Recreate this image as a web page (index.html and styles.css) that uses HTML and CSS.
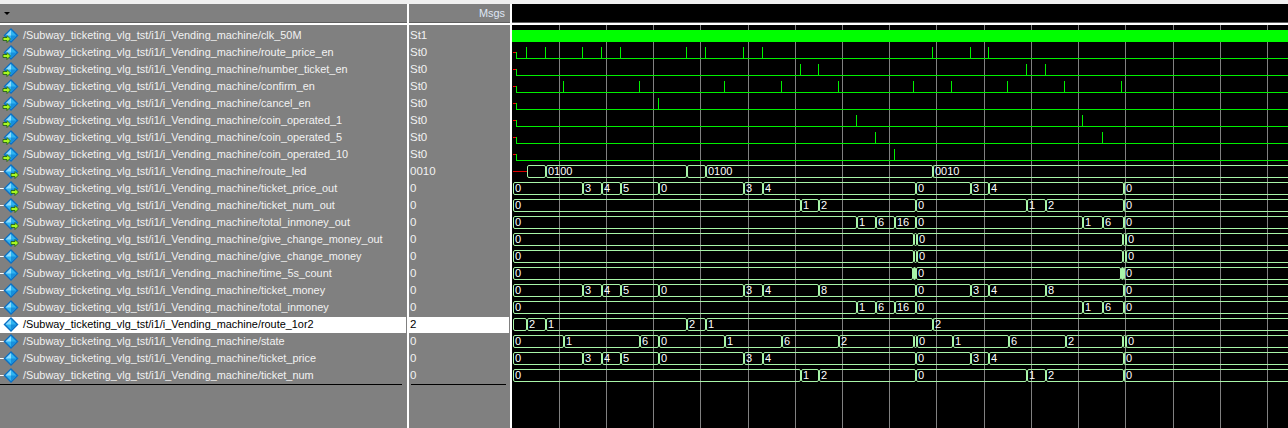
FILE: index.html
```html
<!DOCTYPE html>
<html lang="en">
<head>
<meta charset="utf-8">
<title>Wave</title>
<link rel="stylesheet" href="styles.css">
</head>
<body>
<svg class="defs" aria-hidden="true">
  <symbol id="dia" viewBox="0 0 20 17">
    <path d="M11 1 18.500 8.500 11 16 3.500 8.500Z" fill="#0a6fc4"/>
    <path d="M11 3 16.500 8.500 11 14 5.500 8.500Z" fill="#2fb4f0"/>
    <path d="M11 3 5.500 8.500H11Z" fill="#8edcff"/>
    <path d="M11 8.500H16.500L11 14Z" fill="#1890dc"/>
  </symbol>
  <symbol id="plain" viewBox="0 0 20 17">
    <path d="M0 8.500H4" stroke="#fff"/>
    <use href="#dia"/>
  </symbol>
  <symbol id="in" viewBox="0 0 20 17">
    <use href="#dia"/>
    <path d="M3 10.500H7V8.500L10.500 12 7 15.500V13.500H3Z" fill="#a8f820" stroke="#1c5a10" stroke-width=".8"/>
  </symbol>
  <symbol id="out" viewBox="0 0 20 17">
    <path d="M0 8.500H4" stroke="#fff"/>
    <use href="#dia"/>
    <path d="M11 10.500H15V8.500L18.500 12 15 15.500V13.500H11Z" fill="#a8f820" stroke="#1c5a10" stroke-width=".8"/>
  </symbol>
</svg>
<div class="strip"></div>
<main class="pane">
  <section class="col names">
    <header class="head"><span class="caret"></span></header>
    <div class="rule"></div>
    <div class="list">
      <div class="row"><svg class="ic"><use href="#in"/></svg><span>/Subway_ticketing_vlg_tst/i1/i_Vending_machine/clk_50M</span></div>
      <div class="row"><svg class="ic"><use href="#in"/></svg><span>/Subway_ticketing_vlg_tst/i1/i_Vending_machine/route_price_en</span></div>
      <div class="row"><svg class="ic"><use href="#in"/></svg><span>/Subway_ticketing_vlg_tst/i1/i_Vending_machine/number_ticket_en</span></div>
      <div class="row"><svg class="ic"><use href="#in"/></svg><span>/Subway_ticketing_vlg_tst/i1/i_Vending_machine/confirm_en</span></div>
      <div class="row"><svg class="ic"><use href="#in"/></svg><span>/Subway_ticketing_vlg_tst/i1/i_Vending_machine/cancel_en</span></div>
      <div class="row"><svg class="ic"><use href="#in"/></svg><span>/Subway_ticketing_vlg_tst/i1/i_Vending_machine/coin_operated_1</span></div>
      <div class="row"><svg class="ic"><use href="#in"/></svg><span>/Subway_ticketing_vlg_tst/i1/i_Vending_machine/coin_operated_5</span></div>
      <div class="row"><svg class="ic"><use href="#in"/></svg><span>/Subway_ticketing_vlg_tst/i1/i_Vending_machine/coin_operated_10</span></div>
      <div class="row"><svg class="ic"><use href="#out"/></svg><span>/Subway_ticketing_vlg_tst/i1/i_Vending_machine/route_led</span></div>
      <div class="row"><svg class="ic"><use href="#out"/></svg><span>/Subway_ticketing_vlg_tst/i1/i_Vending_machine/ticket_price_out</span></div>
      <div class="row"><svg class="ic"><use href="#out"/></svg><span>/Subway_ticketing_vlg_tst/i1/i_Vending_machine/ticket_num_out</span></div>
      <div class="row"><svg class="ic"><use href="#out"/></svg><span>/Subway_ticketing_vlg_tst/i1/i_Vending_machine/total_inmoney_out</span></div>
      <div class="row"><svg class="ic"><use href="#out"/></svg><span>/Subway_ticketing_vlg_tst/i1/i_Vending_machine/give_change_money_out</span></div>
      <div class="row"><svg class="ic"><use href="#plain"/></svg><span>/Subway_ticketing_vlg_tst/i1/i_Vending_machine/give_change_money</span></div>
      <div class="row"><svg class="ic"><use href="#plain"/></svg><span>/Subway_ticketing_vlg_tst/i1/i_Vending_machine/time_5s_count</span></div>
      <div class="row"><svg class="ic"><use href="#plain"/></svg><span>/Subway_ticketing_vlg_tst/i1/i_Vending_machine/ticket_money</span></div>
      <div class="row"><svg class="ic"><use href="#plain"/></svg><span>/Subway_ticketing_vlg_tst/i1/i_Vending_machine/total_inmoney</span></div>
      <div class="row sel"><svg class="ic"><use href="#plain"/></svg><span>/Subway_ticketing_vlg_tst/i1/i_Vending_machine/route_1or2</span></div>
      <div class="row"><svg class="ic"><use href="#plain"/></svg><span>/Subway_ticketing_vlg_tst/i1/i_Vending_machine/state</span></div>
      <div class="row"><svg class="ic"><use href="#plain"/></svg><span>/Subway_ticketing_vlg_tst/i1/i_Vending_machine/ticket_price</span></div>
      <div class="row"><svg class="ic"><use href="#plain"/></svg><span>/Subway_ticketing_vlg_tst/i1/i_Vending_machine/ticket_num</span></div>
      <div class="base"></div>
    </div>
  </section>
  <section class="col values">
    <header class="head msgs">Msgs</header>
    <div class="rule"></div>
    <div class="list">
      <div class="row">St1</div><div class="row">St0</div><div class="row">St0</div><div class="row">St0</div>
      <div class="row">St0</div><div class="row">St0</div><div class="row">St0</div><div class="row">St0</div>
      <div class="row">0010</div><div class="row">0</div><div class="row">0</div><div class="row">0</div>
      <div class="row">0</div><div class="row">0</div><div class="row">0</div><div class="row">0</div>
      <div class="row">0</div><div class="row sel">2</div><div class="row">0</div><div class="row">0</div>
      <div class="row">0</div>
      <div class="base"></div>
    </div>
  </section>
  <section class="wave">
    <header class="wave-head"></header>
    <div class="rule"></div>
    <div class="tracks">
      <svg class="grid" aria-hidden="true" width="776" height="403">
        <path d="M47.500 0V403M94.500 0V403M141.500 0V403M188.500 0V403M236.500 0V403M283.500 0V403M330.500 0V403M377.500 0V403M424.500 0V403M472.500 0V403M519.500 0V403M566.500 0V403M613.500 0V403M661.500 0V403M708.500 0V403M755.500 0V403" stroke="#808080" fill="none"/>
      </svg>
      <div class="clock"></div>

      <div class="sig"><i class="dash"></i><i class="rise"></i><i class="lo" style="width:10px"></i><i class="lo" style="width:19px"></i><i class="lo" style="width:37px"></i><i class="lo" style="width:19px"></i><i class="lo" style="width:19px"></i><i class="lo" style="width:66px"></i><i class="lo" style="width:19px"></i><i class="lo" style="width:38px"></i><i class="lo" style="width:19px"></i><i class="lo" style="width:170px"></i><i class="lo" style="width:38px"></i><i class="lo" style="width:18px"></i><i class="lo end"></i></div>
      <div class="sig"><i class="dash"></i><i class="rise"></i><i class="lo" style="width:284px"></i><i class="lo" style="width:18px"></i><i class="lo" style="width:208px"></i><i class="lo" style="width:19px"></i><i class="lo end"></i></div>
      <div class="sig"><i class="dash"></i><i class="rise"></i><i class="lo" style="width:47px"></i><i class="lo" style="width:76px"></i><i class="lo" style="width:85px"></i><i class="lo" style="width:57px"></i><i class="lo" style="width:57px"></i><i class="lo" style="width:75px"></i><i class="lo" style="width:38px"></i><i class="lo" style="width:56px"></i><i class="lo" style="width:57px"></i><i class="lo" style="width:57px"></i><i class="lo end"></i></div>
      <div class="sig"><i class="dash"></i><i class="rise"></i><i class="lo" style="width:142px"></i><i class="lo end"></i></div>
      <div class="sig"><i class="dash"></i><i class="rise"></i><i class="lo" style="width:340px"></i><i class="lo" style="width:226px"></i><i class="lo end"></i></div>
      <div class="sig"><i class="dash"></i><i class="rise"></i><i class="lo" style="width:359px"></i><i class="lo" style="width:227px"></i><i class="lo end"></i></div>
      <div class="sig"><i class="dash"></i><i class="rise"></i><i class="lo" style="width:378px"></i><i class="lo end"></i></div>

      <div class="sig"><i class="undef"></i><b class="seg" style="width:19px"></b><b class="seg" style="width:141px">0100</b><b class="seg" style="width:19px"></b><b class="seg" style="width:227px">0100</b><b class="seg end">0010</b></div>
      <div class="sig"><b class="seg" style="width:70px">0</b><b class="seg" style="width:19px">3</b><b class="seg" style="width:19px">4</b><b class="seg" style="width:38px">5</b><b class="seg" style="width:85px">0</b><b class="seg" style="width:19px">3</b><b class="seg" style="width:153px">4</b><b class="seg" style="width:55px">0</b><b class="seg" style="width:18px">3</b><b class="seg" style="width:135px">4</b><b class="seg end">0</b></div>
      <div class="sig"><b class="seg" style="width:288px">0</b><b class="seg" style="width:18px">1</b><b class="seg" style="width:97px">2</b><b class="seg" style="width:111px">0</b><b class="seg" style="width:19px">1</b><b class="seg" style="width:78px">2</b><b class="seg end">0</b></div>
      <div class="sig"><b class="seg" style="width:344px">0</b><b class="seg" style="width:19px">1</b><b class="seg" style="width:19px">6</b><b class="seg" style="width:21px">16</b><b class="seg" style="width:167px">0</b><b class="seg" style="width:20px">1</b><b class="seg" style="width:21px">6</b><b class="seg end">0</b></div>
      <div class="sig"><b class="seg" style="width:401px">0</b><b class="seg" style="width:2px"></b><b class="seg" style="width:206px">0</b><b class="seg" style="width:2px"></b><b class="seg end">0</b></div>
      <div class="sig"><b class="seg" style="width:401px">0</b><b class="seg" style="width:2px"></b><b class="seg" style="width:206px">0</b><b class="seg" style="width:2px"></b><b class="seg end">0</b></div>
      <div class="sig"><b class="seg" style="width:400px">0</b><b class="seg fill" style="width:3px"></b><b class="seg" style="width:205px">0</b><b class="seg fill" style="width:3px"></b><b class="seg end">0</b></div>
      <div class="sig"><b class="seg" style="width:70px">0</b><b class="seg" style="width:19px">3</b><b class="seg" style="width:19px">4</b><b class="seg" style="width:38px">5</b><b class="seg" style="width:85px">0</b><b class="seg" style="width:19px">3</b><b class="seg" style="width:56px">4</b><b class="seg" style="width:97px">8</b><b class="seg" style="width:55px">0</b><b class="seg" style="width:18px">3</b><b class="seg" style="width:57px">4</b><b class="seg" style="width:78px">8</b><b class="seg end">0</b></div>
      <div class="sig"><b class="seg" style="width:344px">0</b><b class="seg" style="width:19px">1</b><b class="seg" style="width:19px">6</b><b class="seg" style="width:21px">16</b><b class="seg" style="width:167px">0</b><b class="seg" style="width:20px">1</b><b class="seg" style="width:21px">6</b><b class="seg end">0</b></div>
      <div class="sig"><b class="seg" style="width:14px"></b><b class="seg" style="width:19px">2</b><b class="seg" style="width:141px">1</b><b class="seg" style="width:19px">2</b><b class="seg" style="width:227px">1</b><b class="seg end">2</b></div>
      <div class="sig"><b class="seg" style="width:51px">0</b><b class="seg" style="width:76px">1</b><b class="seg" style="width:19px">6</b><b class="seg" style="width:66px">0</b><b class="seg" style="width:57px">1</b><b class="seg" style="width:57px">6</b><b class="seg" style="width:75px">2</b><b class="seg" style="width:2px"></b><b class="seg" style="width:36px">0</b><b class="seg" style="width:56px">1</b><b class="seg" style="width:57px">6</b><b class="seg" style="width:57px">2</b><b class="seg" style="width:2px"></b><b class="seg end">0</b></div>
      <div class="sig"><b class="seg" style="width:70px">0</b><b class="seg" style="width:19px">3</b><b class="seg" style="width:19px">4</b><b class="seg" style="width:38px">5</b><b class="seg" style="width:85px">0</b><b class="seg" style="width:19px">3</b><b class="seg" style="width:153px">4</b><b class="seg" style="width:55px">0</b><b class="seg" style="width:18px">3</b><b class="seg" style="width:135px">4</b><b class="seg end">0</b></div>
      <div class="sig"><b class="seg" style="width:288px">0</b><b class="seg" style="width:18px">1</b><b class="seg" style="width:97px">2</b><b class="seg" style="width:111px">0</b><b class="seg" style="width:19px">1</b><b class="seg" style="width:78px">2</b><b class="seg end">0</b></div>
    </div>
  </section>
</main>
</body>
</html>
```
FILE: styles.css
```css
* { box-sizing: border-box; }
html, body { margin: 0; height: 100%; }
body {
  width: 1288px;
  height: 428px;
  overflow: hidden;
  background: #808080;
  font: 10.900px/17px "Liberation Sans", Arial, sans-serif;
  color: #f2f2f2;
}
.defs { display: none; }
.strip { height: 4px; background: #f0f0f0; }
.pane { display: flex; height: 424px; }
.col { flex: none; border-right: 2px solid #fff; display: flex; flex-direction: column; }
.names { width: 409px; }
.values { width: 103px; }
.head {
  height: 19px;
  border-bottom: 1px solid #5e5e5e;
  display: flex;
  align-items: center;
}
.caret {
  margin: 1px 0 0 4px;
  border: 3px solid transparent;
  border-top: 3px solid #000;
  border-bottom: 0;
  width: 0;
  height: 0;
}
.msgs { justify-content: flex-end; padding-right: 5px; color: #dfe6f5; }
.rule { height: 2px; background: #fff; }
.list { padding-top: 2px; }
.row {
  height: 17px;
  display: flex;
  align-items: center;
  white-space: nowrap;
}
.values .row { padding-left: 1px; font-size: 11.500px; }
.names .row { margin-right: 1px; }
.values .row { margin-right: 1px; }
.ic { width: 20px; height: 17px; flex: none; margin-right: 3px; }
.sel {
  color: #000;
  background: linear-gradient(#808080 1px, #fff 1px);
}
.base { height: 1px; background: #000; margin-right: 5px; }
.values .base { margin: 0 4px 0 2px; }

.wave { flex: 1; min-width: 0; background: #000; display: flex; flex-direction: column; }
.wave-head { height: 19px; border-bottom: 1px solid #5e5e5e; }
.tracks { flex: 1; position: relative; padding-top: 5px; }
.grid { position: absolute; left: 0; top: 0; }
.clock { position: relative; height: 12px; margin-bottom: 4px; background: #00ff00; }
.sig {
  position: relative;
  height: 13px;
  margin-bottom: 4px;
  padding-left: 1px;
  display: flex;
  align-items: flex-end;
  font: 11px/11px "Liberation Sans", Arial, sans-serif;
  color: #fff;
}
.sig i, .sig b { display: block; flex: none; font-weight: 400; }
.dash { width: 3px; height: 1px; background: #f00; margin-bottom: 6px; }
.rise { width: 1px; height: 7px; background: #00f000; }
.lo { height: 12px; border-bottom: 1px solid #00f000; border-right: 1px solid #00f000; }
.lo.end { flex: 1; border-right: 0; }
.undef { width: 14px; height: 1px; background: #e00000; margin-bottom: 6px; }
.seg {
  height: 13px;
  border: 1px solid #a8f5a8;
  border-radius: 2px;
  overflow: hidden;
  white-space: nowrap;
  padding-left: 1px;
}
.seg.end { flex: 1; border-right: 0; border-radius: 2px 0 0 2px; }
.fill { background: #a8f5a8; padding: 0; }
```
